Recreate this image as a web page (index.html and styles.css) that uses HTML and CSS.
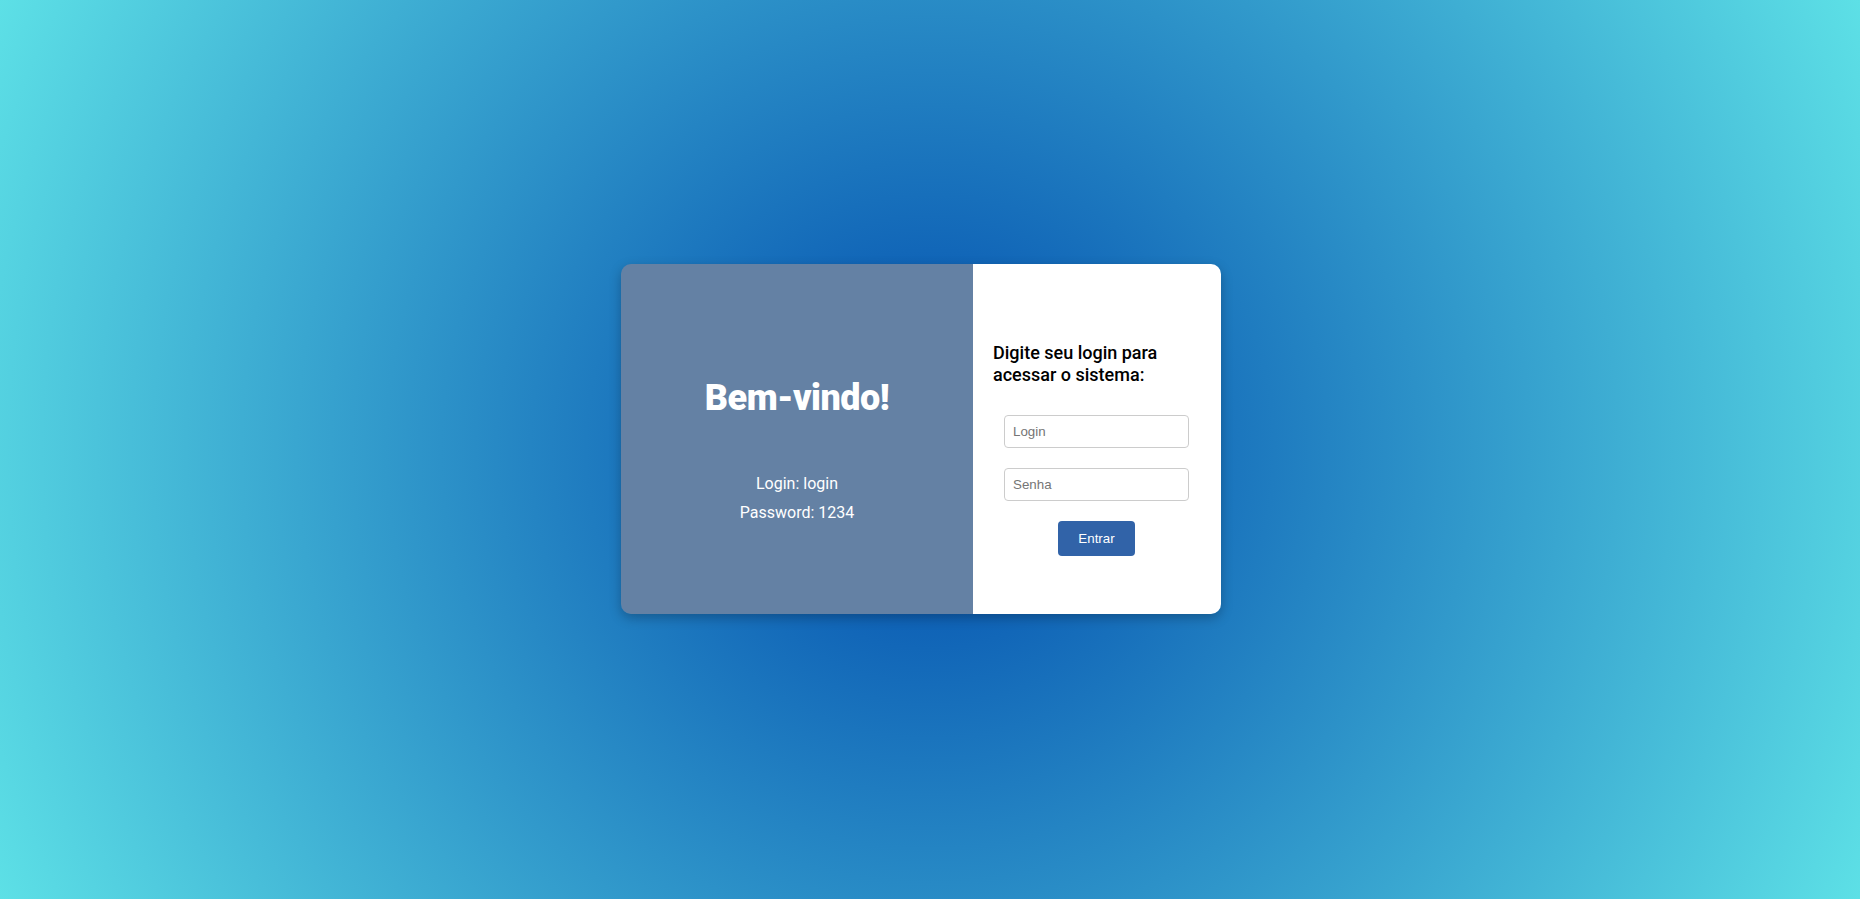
FILE: index.html
```html
<!DOCTYPE html>
<html lang="pt">
<head>
<meta charset="utf-8">
<title>Login</title>
<link rel="stylesheet" href="styles.css">
</head>
<body>
  <main class="card">
    <section class="welcome">
      <h1 class="welcome-title">Bem-vindo!</h1>
      <div class="creds">
        <p class="cred">Login: login</p>
        <p class="cred">Password: 1234</p>
      </div>
    </section>
    <section class="form-panel">
      <h2 class="form-title">Digite seu login para acessar o sistema:</h2>
      <form class="login-form">
        <input class="field" type="text" placeholder="Login">
        <input class="field" type="password" placeholder="Senha">
        <button class="btn" type="button">Entrar</button>
      </form>
    </section>
  </main>
</body>
</html>
```
FILE: styles.css
```css
html, body {
  margin: 0;
  height: 100%;
}
body {
  box-sizing: border-box;
  height: 100vh;
  padding: 0 18px 21px 0;
  display: flex;
  align-items: center;
  justify-content: center;
  background: radial-gradient(circle, #004aad, #5de0e6);
  font-family: Roboto, "Liberation Sans", sans-serif;
}
.card {
  display: flex;
  width: 600px;
  height: 350px;
  border-radius: 10px;
  overflow: hidden;
  box-shadow: 0 4px 12px rgba(0, 0, 0, 0.25);
}
.welcome {
  width: 352px;
  background: #6481a4;
  color: #fff;
  display: flex;
  flex-direction: column;
  align-items: center;
  padding-top: 113px;
  box-sizing: border-box;
}
.welcome-title {
  margin: 0;
  font-size: 36px;
  font-weight: 900;
  letter-spacing: -0.5px;
  line-height: 42px;
}
.creds {
  margin-top: 50px;
  text-align: center;
}
.cred {
  margin: 0;
  font-size: 16px;
  line-height: 29px;
}
.form-panel {
  width: 248px;
  background: #fff;
  box-sizing: border-box;
  padding: 78px 19px 0 19px;
}
.form-title {
  margin: 0 0 0 1px;
  font-size: 18px;
  font-weight: 500;
  line-height: 21.5px;
  color: #000;
}
.login-form {
  margin-top: 30px;
  display: flex;
  flex-direction: column;
  align-items: center;
  gap: 20px;
}
.field {
  box-sizing: border-box;
  width: 185px;
  height: 33px;
  margin-right: 1px;
  padding: 0 8px;
  border: 1px solid #cccccc;
  border-radius: 4px;
  font-family: "Liberation Sans", Arial, sans-serif;
  font-size: 13.33px;
  color: #333;
  outline: none;
}
.field::placeholder {
  color: #757575;
}
.btn {
  box-sizing: border-box;
  width: 77px;
  height: 35px;
  margin-right: 1px;
  border: none;
  border-radius: 4px;
  background: #3163a8;
  color: #fff;
  font-family: "Liberation Sans", Arial, sans-serif;
  font-size: 13.33px;
  cursor: pointer;
}
```
